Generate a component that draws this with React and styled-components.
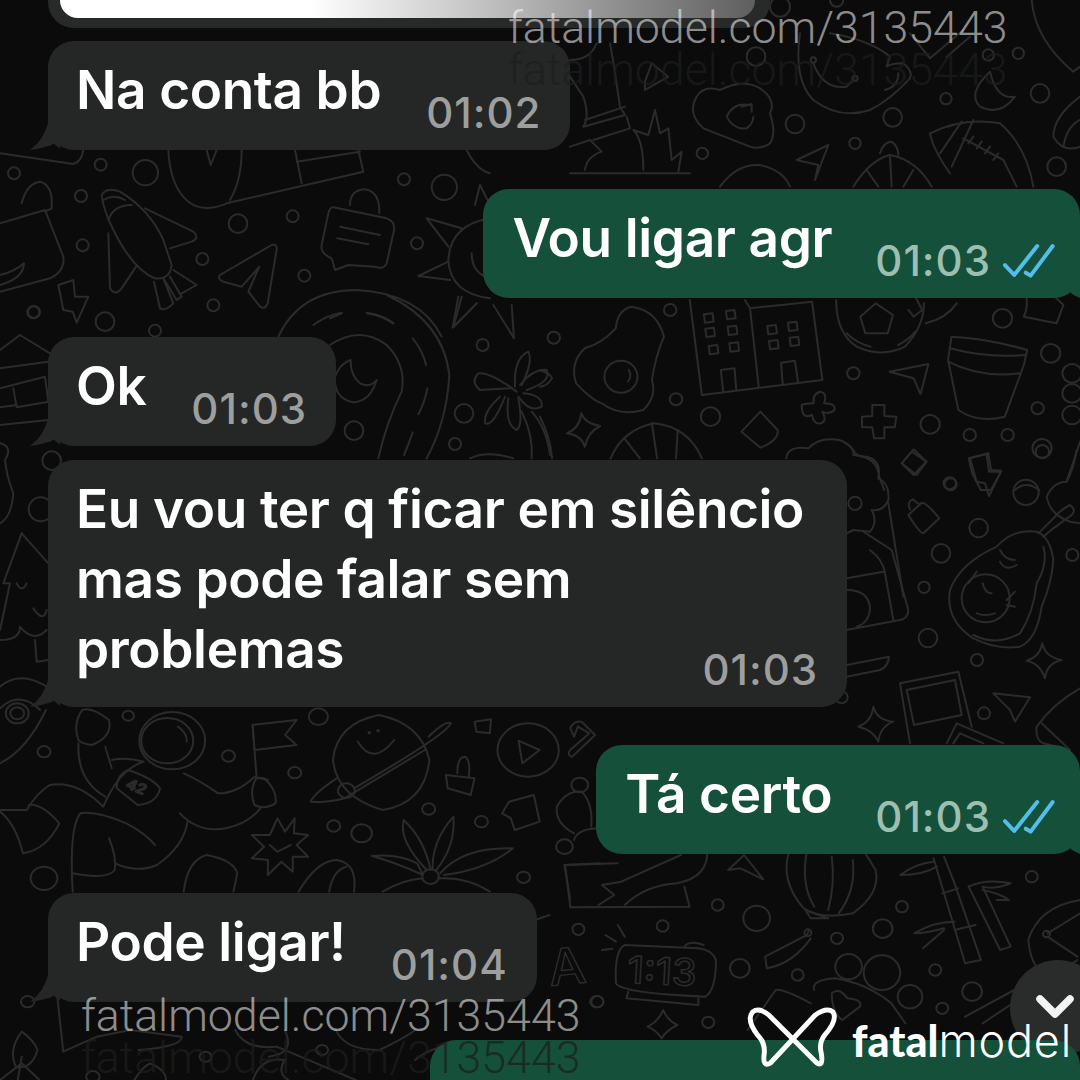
import React from 'react'
import styled, { createGlobalStyle } from 'styled-components'

const GlobalStyle = createGlobalStyle`
  html, body { margin: 0; padding: 0; background: #0b0b0b; }
`

const Screen = styled.div`
  position: relative;
  width: 1080px;
  height: 1080px;
  overflow: hidden;
  background: #0b0b0b;
  font-family: Inter, "Liberation Sans", sans-serif;
`

const Wallpaper = styled.svg`
  position: absolute;
  inset: 0;
  width: 1080px;
  height: 1080px;
`

const Chat = styled.div`
  position: relative;
  display: flex;
  flex-direction: column;
  align-items: flex-start;
`

const ReplyCard = styled.div`
  box-sizing: border-box;
  width: 722px;
  height: 28px;
  margin-left: 48px;
  padding: 0 15px 0 12px;
  background: #282929;
  border-radius: 0 0 26px 26px;
`

const ReplyImage = styled.div`
  height: 18px;
  border-radius: 0 0 18px 18px;
  background: linear-gradient(90deg, #fff 0%, #fff 36%, #c9c9c9 58%, #8f8f8f 80%, #5f5f5f 100%);
`

const Bubble = styled.div`
  position: relative;
  box-sizing: border-box;
  display: flex;
  flex-direction: ${p => (p.$stacked ? 'column' : 'row')};
  align-items: flex-end;
  gap: ${p => (p.$stacked ? 0 : p.$out ? 43 : 45)}px;
  margin-top: ${p => p.$top}px;
  margin-left: ${p => (p.$out ? 0 : 48)}px;
  align-self: ${p => (p.$out ? 'flex-end' : 'flex-start')};
  padding: 14px ${p => (p.$out ? 23 : 29)}px 25px ${p => (p.$out ? 29 : 28)}px;
  background: ${p => (p.$out ? '#15503b' : '#252626')};
  border-radius: 26px;
`

const Message = styled.div`
  align-self: flex-start;
  color: #fff;
  font-size: 53.2px;
  font-weight: 600;
  line-height: 70px;
  letter-spacing: -0.4px;
  white-space: nowrap;
  ${p => p.$stacked && 'margin-right: 14px;'}
`

const Meta = styled.div`
  display: flex;
  align-items: center;
  gap: 10px;
  margin: ${p => (p.$stacked ? '-33px 0 -7px' : '0 0 -7px')};
`

const Time = styled.span`
  color: ${p => (p.$out ? '#9dbfb1' : '#9d9e9e')};
  font-size: 42px;
  font-weight: 500;
  line-height: 38px;
  letter-spacing: 1px;
  white-space: nowrap;
`

const Ticks = styled.svg`
  width: 56px;
  height: 38px;
`

const Tail = styled.svg`
  position: absolute;
  bottom: 0;
  ${p => (p.$out ? 'right: 0;' : 'left: -18px;')}
  width: ${p => (p.$out ? 20 : 30)}px;
  height: 30px;
`

const NextBubble = styled.div`
  width: 650px;
  height: 80px;
  margin-top: 38px;
  align-self: flex-end;
  background: #15503b;
  border-radius: 26px 26px 0 0;
`

const ScrollButton = styled.div`
  position: absolute;
  left: 1010px;
  top: 960px;
  width: 96px;
  height: 96px;
  border-radius: 50%;
  background: #2a2b2b;
  display: flex;
  align-items: center;
  justify-content: center;
`

const Chevron = styled.svg`
  width: 40px;
  height: 26px;
  margin-left: -6px;
  margin-top: -2px;
`

const Watermark = styled.div`
  position: absolute;
  left: ${p => p.$x}px;
  top: ${p => p.$y}px;
  font-family: Roboto, "Liberation Sans", sans-serif;
  font-size: 44.7px;
  font-weight: 300;
  line-height: 50px;
  white-space: nowrap;
  color: ${p => (p.$dim ? 'rgba(28, 30, 30, 0.75)' : 'rgba(255, 255, 255, 0.55)')};
`

const Brand = styled.div`
  position: absolute;
  left: 746px;
  top: 1007px;
  display: flex;
  align-items: center;
  gap: 14px;
`

const BrandMark = styled.svg`
  width: 92px;
  height: 64px;
`

const BrandName = styled.div`
  color: #fff;
  font-family: Lato, Inter, sans-serif;
  font-size: 43px;
  line-height: 50px;
  font-weight: 900;
  margin-top: 4px;
  white-space: nowrap;
  span { font-family: Inter, sans-serif; font-size: 45px; font-weight: 300; letter-spacing: 0.8px; }
`

const sq = (x, y, s) => `M${x} ${y} L${x + s} ${y - 3} L${x + s + 3} ${y + s - 3} L${x + 3} ${y + s}Z`

// wallpaper drawing, each patch is in its own coordinates and gets mapped to the page
const patches = [
  {
    at: [0, 150, 3, 3],
    c: [[42, 70, 18], [302, 44, 18], [436, 68, 38], [243, 138, 18], [248, 286, 18], [100, 487, 18], [315, 515, 28], [607, 327, 18], [714, 221, 28], [878, 199, 18], [913, 377, 18], [640, 466, 18], [465, 542, 18], [1212, 88, 18], [1333, 112, 38], [1251, 280, 18]],
    p: [
      'M0 220 L135 180 L190 320 Q195 365 150 385 L0 425', 'M65 160 Q80 100 120 95 Q160 105 155 175 L135 185', 'M0 375 Q45 365 72 340 Q70 385 0 405',
      'M175 405 L220 390 L225 440 L265 440 L230 518 L218 485 L190 480Z',
      'M305 135 Q320 110 360 125 Q450 180 490 270 L515 345 Q510 390 465 385 Q400 360 340 240 Q310 180 305 135Z', 'M325 210 Q340 165 395 165', 'M310 150 Q340 130 375 150',
      'M435 175 L580 245 Q600 265 575 275 L510 295', 'M325 250 L330 415 Q345 440 365 415 L408 350',
      'M462 395 L480 475 Q495 485 520 460 L490 385 M490 385 L530 450 L545 440 L510 380 M520 360 L590 405 L545 430',
      'M660 375 L815 285 Q832 280 830 298 L803 460 Q795 480 780 470 L745 425 L778 350 L725 410 L670 395 Q650 385 660 375Z',
      'M505 0 Q510 110 565 155 Q610 190 680 160 L1090 65 L1075 0', 'M725 0 Q725 90 690 150', 'M885 0 L905 100', 'M890 35 L1080 5', 'M620 0 L632 45 L650 0', 'M0 10 L220 42 Q245 35 250 0',
      'M1050 165 Q1050 120 1095 118 Q1140 125 1138 190', 'M1000 172 L1160 205 Q1190 215 1180 250 L1160 340 Q1150 360 1125 350 L1045 345 L1005 360 L995 325 Q960 310 965 285 L985 190 Q990 170 1000 172Z', 'M1020 230 L1140 255', 'M1012 265 L1105 283',
      'M1470 205 Q1350 225 1345 330 Q1350 430 1470 445', 'M1385 235 L1280 205 L1345 290', 'M1345 335 L1255 378 L1350 390', 'M1385 440 L1360 532 L1430 460', 'M1425 165 L1440 105 L1470 165', 'M1415 310 Q1415 370 1470 385',
      'M835 560 Q900 420 1070 420 Q1260 430 1325 560', 'M940 525 Q980 495 1025 488', 'M1100 488 Q1150 495 1180 520', 'M1400 0 Q1430 60 1470 70',
    ],
  },
  {
    at: [840, 450, 3, 3],
    c: [[332, 103, 18], [558, 127, 38], [416, 234, 28], [303, 310, 28], [252, 412, 17], [697, 315, 18], [264, 564, 28], [411, 630, 18], [432, 790, 18], [607, 5, 20], [437, 445, 72], [5, 742, 18], [45, 160, 20]],
    p: [
      'M40 0 Q45 20 80 20 Q125 30 115 85 Q150 100 145 150 Q130 185 95 180 Q115 215 90 245 L40 240 L20 250',
      'M70 245 L155 300 L205 480 Q205 505 180 510 L20 540', 'M145 160 L190 440', 'M90 300 Q130 330 135 370 L160 510', 'M20 385 L130 365', 'M20 420 Q90 420 90 480 Q85 520 50 530', 'M20 680 L120 660 Q145 650 147 620 L20 645',
      'M185 40 L215 5 L260 35 L230 75Z', 'M390 25 L440 12 L447 65 L483 65 L447 138 L435 100 L410 95Z', 'M205 195 L245 158 Q260 158 298 205 L250 250 Q240 250 205 195Z', 'M210 178 Q200 155 218 148 L240 165',
      'M590 245 Q520 235 470 290 Q360 340 330 420 Q315 510 400 565 Q470 600 540 590 Q590 570 605 470 Q635 400 640 330 Q630 260 590 245Z', 'M610 290 Q625 340 590 400 Q580 490 540 550 Q470 590 400 555', 'M595 250 L640 205 Q660 180 690 165 Q710 180 695 195 L640 235 L610 260',
      'M428 400 Q435 430 455 430', 'M480 300 Q495 330 525 330', 'M480 335 Q495 365 530 345', 'M410 490 Q435 500 465 490', 'M385 400 L410 365', 'M500 450 L525 425 M500 465 L525 470',
      'M710 0 Q700 60 680 95 Q640 95 620 140 Q630 195 690 215 L720 220',
      'M607 580 Q615 620 665 630 Q620 640 615 685 Q600 640 560 632 Q600 620 607 580Z', 'M180 700 L355 665 L395 830 M180 700 L210 880', 'M200 720 L345 690 L365 795 L222 825Z', 'M320 880 L350 820 L490 880', 'M340 880 L360 850 L430 880',
      'M100 770 Q110 810 160 815 Q120 830 115 875 Q100 840 55 830 Q95 815 100 770Z', 'M460 730 L570 742 L525 815 L510 780Z', 'M720 715 Q640 760 590 830 Q585 870 610 880 L690 900', 'M605 820 L690 900',
    ],
  },
  {
    at: [540, 290, 2.904, 3],
    c: [[235, 260, 48], [378, 60, 18], [40, 143, 18], [395, 328, 18], [495, 380, 28], [910, 250, 18], [1133, 403, 28], [1343, 85, 28], [1483, 190, 28], [1445, 355, 18], [1248, 435, 18], [1358, 435, 18], [1458, 475, 28], [1545, 250, 28], [1545, 310, 28], [1545, 375, 28], [1190, 580, 18]],
    p: [
      'M265 50 Q225 60 220 115 Q180 160 130 175 Q85 220 105 280 Q150 330 180 340 Q230 380 300 360 Q340 320 325 270 Q335 200 360 140 Q340 60 265 50Z', 'M258 240 Q268 260 255 275',
      'M435 30 L470 315 L820 270 L790 35 L610 55 L595 30', 'M610 55 L635 290', sq(476, 73, 25), sq(540, 63, 25), sq(480, 116, 25), sq(545, 110, 25), sq(490, 168, 25), sq(550, 160, 25), sq(660, 108, 25), sq(720, 98, 25), sq(665, 153, 25), sq(725, 143, 25),
      'M525 240 L565 235 L570 300 M525 240 L532 305', 'M700 218 L740 212 L750 280 M700 218 L705 285',
      'M860 30 Q860 130 920 170 Q990 205 1060 170 Q1115 110 1115 40', 'M975 40 L1025 75 L1010 130 L945 130 L930 80Z', 'M890 130 Q920 160 960 170', 'M1040 165 Q1070 150 1090 125', 'M1070 60 L1085 80 L1110 60 L1090 20', 'M1120 100 Q1180 85 1210 40',
      'M1015 245 L1128 222 L1105 312 L1085 265Z', 'M815 305 Q835 310 825 340 Q860 340 855 360 Q840 375 820 365 Q835 395 815 400 Q795 405 790 375 Q760 390 760 345 Q770 340 795 340 Q790 310 815 305Z',
      'M965 345 L1000 345 L1000 378 L1035 380 L1030 412 L1000 412 L1000 445 L970 445 L965 412 L935 412 L935 380 L965 378Z',
      'M1195 140 Q1300 145 1415 180 L1405 225 L1350 380 Q1270 400 1215 360 L1185 210Z', 'M1190 175 Q1300 205 1410 195', 'M1185 215 Q1280 265 1395 250',
      'M120 370 Q130 400 175 408 Q140 425 130 470 Q120 435 78 430 Q115 415 120 370Z', 'M640 365 L690 420 Q695 450 640 473 L585 425Z',
      'M205 505 Q240 420 330 400 Q430 410 470 505', 'M245 445 L290 505', 'M325 400 L340 505', 'M400 420 L395 505', 'M715 505 Q720 465 780 475 Q810 440 870 450 Q915 470 910 495 Q980 500 985 560 L1000 600',
      'M1085 478 L1122 515 L1085 555 L1050 520Z', 'M1245 505 L1302 490 L1310 540 L1340 542 L1310 600 L1280 600 L1255 550Z', 'M1410 2 Q1420 50 1405 80 L1500 100 L1520 45 L1480 5', 'M0 240 Q30 250 35 265 Q20 290 0 290', 'M0 380 Q30 440 35 505', 'M1568 455 Q1555 500 1530 570', 'M1380 600 Q1410 570 1450 600',
    ],
  },
  {
    at: [0, 700, 2.613, 3],
    c: [[45, 40, 30], [45, 40, 18], [335, 47, 15], [115, 155, 17], [597, 168, 17], [770, 218, 17], [832, 50, 25], [1120, 327, 17], [1258, 365, 17], [872, 378, 17], [945, 400, 27], [115, 535, 35], [1368, 532, 17], [450, 122, 86], [437, 122, 68], [905, 272, 22], [965, 98, 2], [988, 92, 2], [1380, 150, 80], [1125, 530, 22], [1515, 255, 22], [1475, 440, 22]],
    p: [
      'M205 120 Q190 70 215 30 Q240 20 285 60 Q295 110 240 135 Q210 130 205 120', 'M205 130 Q200 240 275 290', 'M275 140 L292 205', 'M292 180 Q330 170 375 185', 'M375 185 Q310 210 270 320 Q200 240 130 255 Q95 280 70 330 L0 330', 'M0 335 Q40 370 60 460 Q120 450 155 370 Q110 310 75 315',
      'M335 210 Q305 225 305 265 L360 315 Q410 310 418 265 Q400 235 335 210Z', 'M465 80 Q490 100 488 125', 'M480 220 Q520 240 570 280 Q620 280 665 230 L700 240', 'M690 235 Q725 270 720 310 Q690 330 665 315 Q650 270 670 235Z', 'M470 340 Q520 400 590 385 Q650 370 680 325',
      'M660 75 L775 60 L745 105 L775 135 L665 150Z', 'M660 75 L670 225', 'M190 575 Q180 380 210 340 Q250 330 330 370 Q380 400 405 435', 'M285 415 Q305 470 300 510 Q280 540 190 520', 'M300 490 Q360 520 410 495 Q480 440 490 365', 'M480 575 Q490 480 540 465 Q610 480 620 520 L610 575', 'M0 190 Q70 150 120 30',
      'M780 575 Q830 480 880 480 Q935 490 925 575', 'M860 575 Q870 510 905 500',
      'M990 45 Q880 70 870 180 Q880 290 1000 330 Q1110 310 1122 180 Q1100 70 990 45Z', 'M1120 110 Q1165 60 1178 70 Q1165 105 925 265', 'M880 235 Q820 280 812 305 Q850 310 900 295 L1110 150', 'M935 125 Q975 200 1030 120',
      'M1240 65 L1283 58 L1280 100 L1245 95Z', 'M1355 122 L1410 150 L1365 190Z', 'M1490 85 Q1500 60 1520 65 L1555 105 L1495 170 Q1480 165 1490 150 L1540 100 L1510 80 L1500 110Z', 'M1165 225 L1240 235 L1230 285 L1170 265Z', 'M1195 220 Q1195 170 1215 170 Q1230 180 1225 230', 'M1330 305 L1395 285 L1410 365 L1345 390 L1335 355 L1312 340Z',
      'M725 355 L745 395 L770 355 L768 400 L805 405 L775 435 L805 470 L765 470 L765 515 L735 485 L700 525 L700 480 L658 475 L690 440 L658 405 L705 405Z', 'M705 435 L725 455 L760 435',
      'M1115 510 Q1040 420 1055 360 Q1110 420 1125 510', 'M1130 505 Q1130 420 1185 350 Q1190 440 1140 510', 'M1105 525 Q1040 490 972 468 Q1040 460 1090 490 L1105 525', 'M1150 520 Q1210 440 1340 445 Q1270 510 1160 525', 'M1000 575 Q1050 540 1105 535', 'M1145 535 Q1220 530 1280 575',
      'M1500 400 Q1450 370 1455 320 Q1480 270 1520 275 Q1550 310 1545 380', 'M1500 420 Q1510 385 1568 385', 'M1475 495 L1568 490', 'M1475 495 L1490 600',
    ],
    t: [{ s: '42', x: 326, y: 262, size: 42, r: 26 }],
  },
  {
    at: [530, 850, 2.85, 3],
    c: [[535, 165, 17], [646, 205, 38], [1060, 170, 17], [1430, 80, 17], [1005, 236, 28], [875, 265, 17], [138, 238, 17], [378, 228, 17], [598, 355, 28], [763, 375, 17], [908, 350, 38], [1003, 368, 52], [1083, 440, 35], [1155, 360, 17], [1260, 425, 28], [1175, 475, 17], [192, 455, 17], [508, 517, 17], [792, 248, 10], [1472, 252, 10]],
    p: [
      'M100 45 L250 40 M100 45 L115 172 L455 170 L440 110', 'M195 165 L240 135 L205 105 L260 95 L430 15', 'M270 165 Q330 105 420 100 Q510 80 505 0', 'M565 60 L610 15 L665 88 L600 55Z',
      'M740 0 Q710 90 780 175 Q830 210 920 190 Q1000 130 985 60 L950 0', 'M790 0 Q770 100 810 170', 'M860 20 Q870 100 850 180', 'M920 30 Q930 120 880 190', 'M785 180 L850 205 L800 205Z', 'M795 240 Q790 260 780 260 L670 320 L675 355 Q750 340 800 265',
      'M1150 25 L1240 340 L1285 330 L1210 100 L1180 20', 'M1175 130 L1220 115', 'M1210 240 L1270 225', 'M1250 110 L1340 300 L1370 290 L1290 110', 'M1150 35 Q1100 40 1055 75 Q1120 75 1160 50', 'M1250 110 Q1300 85 1370 100 Q1320 120 1290 110', 'M1290 120 Q1340 130 1365 150 L1330 150', 'M1210 215 Q1150 215 1095 250 Q1130 250 1180 235', 'M1180 240 L1120 295',
      'M270 285 Q240 300 245 400 Q260 430 500 440 Q530 420 530 330 Q520 300 480 295Z', 'M280 425 L275 445 L480 465 L480 445', 'M205 300 L235 296', 'M215 255 L245 275', 'M250 225 L270 260', 'M440 290 Q455 270 495 285',
      'M1568 150 Q1450 170 1420 270 Q1425 320 1440 345', 'M1475 250 L1568 190', 'M1475 260 L1560 320', 'M1240 500 L1380 420', 'M1290 520 L1560 330', 'M15 210 L55 195',
      'M620 540 L700 420 Q720 415 800 460', 'M810 420 Q800 390 870 385 Q960 400 1030 460 L1070 520', 'M860 430 Q880 410 905 445 Q950 450 940 470 L890 510 Q860 490 860 430Z', 'M380 480 Q390 510 420 525 Q390 540 375 565 Q360 540 335 530 Q365 515 380 480Z',
    ],
    t: [{ s: '1:13', x: 276, y: 398, size: 112, r: 3 }, { s: 'A', x: 58, y: 408, size: 150, r: -6 }],
  },
  {
    at: [570, 0, 3, 3],
    c: [[558, 170, 28], [675, 372, 28], [968, 352, 28], [855, 430, 17], [397, 460, 17], [1128, 296, 17], [1410, 280, 28], [1345, 160, 17], [1460, 500, 28], [1255, 165, 17], [630, 20, 30], [800, 0, 20], [730, 180, 8], [855, 235, 8]],
    p: [
      'M380 290 Q400 255 450 270 Q520 235 570 265 Q620 300 600 340 Q620 400 600 430 Q570 450 540 440 L400 385 Q350 340 380 290Z', 'M540 315 Q490 305 470 350 Q490 390 530 385 Q550 370 550 350', 'M515 320 L545 312 L545 335',
      'M690 100 Q670 240 730 300 Q810 360 900 330 Q960 300 1020 235 Q1030 215 1000 190 Q960 190 950 200 L960 170 Q900 120 780 100', 'M730 190 Q760 270 830 260 L850 240', 'M945 270 Q985 260 985 220', 'M1020 100 L1080 175 L1180 90', 'M1130 170 L1200 110',
      'M1260 215 Q1190 280 1230 320 Q1290 350 1335 290 Q1280 300 1260 215Z', 'M1080 400 Q1180 350 1290 370 Q1370 440 1390 560', 'M1080 400 Q1090 450 1140 520', 'M1110 460 L1175 365', 'M1145 500 L1210 360', 'M1180 415 L1300 480', 'M1210 410 L1195 430 M1235 425 L1220 445 M1260 440 L1245 460 M1285 460 L1270 480', 'M1300 480 L1340 560',
      'M1385 0 Q1395 120 1510 215 L1530 200', 'M1530 290 Q1450 350 1450 410 Q1480 460 1530 440', 'M1530 360 Q1490 380 1480 440',
      'M930 460 Q940 425 965 425 Q985 440 985 465', 'M850 560 Q900 480 960 465 Q1040 480 1085 560', 'M960 470 L965 560', 'M890 510 L925 560', 'M1030 510 L1000 560', 'M775 435 L680 480 L745 495 L735 540Z',
      'M120 130 Q130 180 150 320 L165 345 L40 380 Q60 350 40 290 L0 230', 'M45 360 L165 320', 'M70 420 L180 385 L170 350', 'M0 520 L360 520', 'M220 510 Q220 420 190 390 L235 405 L255 330 L270 400 L295 385 L305 480 L335 455 L325 515', 'M45 510 Q50 470 95 455 L60 420 L0 440', 'M450 560 Q500 490 570 495 Q640 510 660 560', 'M80 130 Q60 180 0 180', 'M225 245 L245 190 L295 230 L225 270Z',
    ],
  },
  {
    at: [330, 295, 3, 3],
    c: [[72, 407, 28], [458, 150, 18], [402, 355, 28], [375, 447, 18]],
    p: [
      'M170 0 Q340 80 358 240 Q350 380 290 490', 'M0 70 L35 55', 'M110 55 Q150 60 190 85', 'M248 130 Q280 170 288 210', 'M292 280 Q285 320 265 358', 'M248 412 Q235 450 222 480', 'M0 150 Q90 90 170 150 Q230 210 215 290 Q170 380 145 490',
      'M62 195 Q60 240 90 265 Q120 280 140 255 Q120 320 70 322 Q10 310 15 245 Q30 205 62 195Z',
      'M385 5 L368 98 L440 25', 'M490 30 L552 130 L545 30', 'M560 290 Q480 230 445 235 Q420 260 450 285 L540 280', 'M555 275 Q550 190 595 170 Q610 200 575 270', 'M570 270 Q610 220 650 225 Q665 260 590 285', 'M580 295 Q640 300 635 335 Q600 355 565 305', 'M565 310 Q580 390 560 405 Q525 390 535 310', 'M525 305 Q490 395 465 385 Q460 350 510 305', 'M420 490 Q470 465 550 490', 'M575 350 Q610 420 605 490', 'M605 350 Q650 400 660 480',
    ],
  },
  {
    at: [0, 290, 3, 3],
    c: [[102, 66, 18], [155, 512, 28], [122, 658, 36]],
    p: [
      'M0 180 L60 135 L150 190', 'M0 235 L145 215', 'M0 405 L145 390', 'M0 295 L135 260 L145 335 L50 352 L40 295', 'M0 352 L50 345', 'M0 460 Q40 470 15 510 Q20 560 40 610 Q35 680 0 700',
      'M65 730 L145 820', 'M65 730 L10 880 L30 880 L0 1020', 'M50 880 Q65 910 80 880', 'M100 955 Q130 1000 140 960', 'M0 1050 Q60 1050 60 1010 Q100 1060 140 1020', 'M105 1050 L110 1115 L145 1110', 'M0 1190 Q60 1140 140 1190', 'M0 1255 Q60 1200 120 1260',
    ],
  },
  {
    at: [0, 980, 2.53, 3],
    c: [[235, 290, 17], [520, 230, 15], [815, 210, 15], [1510, 65, 17], [70, 65, 17]],
    p: [
      'M55 155 Q20 210 40 260 Q80 270 95 210 Q85 180 55 155Z', 'M55 230 L45 300', 'M0 300 L55 250 L100 300', 'M145 50 L160 215 L245 170 L330 150 L460 170 Q460 200 350 210', 'M595 150 Q620 210 700 200 L820 260 L900 300', 'M720 150 Q750 220 680 230', 'M850 150 Q870 210 960 210 Q1030 170 1050 150', 'M1050 240 Q1100 190 1200 190', 'M340 300 Q360 260 380 250 Q420 270 420 300', 'M640 300 Q660 230 720 240 Q700 280 730 300',
    ],
  },
]

const Doodles = () => (
  <Wallpaper viewBox="0 0 1080 1080">
    {patches.map(({ at: [x, y, sx, sy], c, p, t = [] }, i) => (
      <g key={i} transform={`translate(${x} ${y}) scale(${1 / sx} ${1 / sy})`} fill="none" stroke="#2b2b2b" strokeLinecap="round" strokeLinejoin="round">
        {c.map(([cx, cy, r], j) => <circle key={j} cx={cx} cy={cy} r={r} strokeWidth="2" vectorEffect="non-scaling-stroke" />)}
        {p.map((d, j) => <path key={j} d={d} strokeWidth="2" vectorEffect="non-scaling-stroke" />)}
        {t.map(item => (
          <text key={item.s} x={item.x} y={item.y} fontSize={item.size} fontFamily="Inter, sans-serif" fontWeight="500" strokeWidth="1.5" vectorEffect="non-scaling-stroke" transform={`rotate(${item.r} ${item.x} ${item.y})`}>{item.s}</text>
        ))}
      </g>
    ))}
  </Wallpaper>
)

const Row = ({ out, top, stacked, time, children }) => (
  <Bubble $out={out} $top={top} $stacked={stacked}>
    <Message $stacked={stacked}>{children}</Message>
    <Meta $stacked={stacked}>
      <Time $out={out}>{time}</Time>
      {out && (
        <Ticks viewBox="480 185 170 115" fill="none" stroke="#53bdeb" strokeWidth="12" strokeLinecap="round" strokeLinejoin="round">
          <path d="M492 255 L520 285 L590 197" />
          <path d="M555 278 L570 287 L637 197" />
        </Ticks>
      )}
    </Meta>
    {out ? (
      <Tail $out viewBox="0 0 20 30"><path d="M8 23 Q14 28 20 30 L20 4 Q16 18 8 23Z" fill="#15503b" /></Tail>
    ) : (
      <Tail viewBox="0 0 30 30"><path d="M19 0 Q14 20 0 30 Q14 28 24 24 Q32 30 30 30 L30 0Z" fill="#252626" /></Tail>
    )}
  </Bubble>
)

export default function App() {
  return (
    <Screen>
      <GlobalStyle />
      <Doodles />
      <ScrollButton>
        <Chevron viewBox="0 0 40 26" fill="none" stroke="#f4f4f4" strokeWidth="7.5" strokeLinecap="round" strokeLinejoin="round">
          <path d="M5 5 L20 20 L35 5" />
        </Chevron>
      </ScrollButton>
      <Chat>
        <ReplyCard><ReplyImage /></ReplyCard>
        <Row top={13} time="01:02">Na conta bb</Row>
        <Row out top={39} time="01:03">Vou ligar agr</Row>
        <Row top={39} time="01:03">Ok</Row>
        <Row top={14} stacked time="01:03">
          Eu vou ter q ficar em silêncio<br />mas pode falar sem<br />problemas
        </Row>
        <Row out top={38} time="01:03">Tá certo</Row>
        <Row top={39} time="01:04">Pode ligar!</Row>
        <NextBubble />
      </Chat>
      <Watermark $x={508} $y={3}>fatalmodel.com/3135443</Watermark>
      <Watermark $x={508} $y={45} $dim>fatalmodel.com/3135443</Watermark>
      <Watermark $x={81} $y={991}>fatalmodel.com/3135443</Watermark>
      <Watermark $x={81} $y={1033} $dim>fatalmodel.com/3135443</Watermark>
      <Brand>
        <BrandMark viewBox="130 200 280 195" fill="none" stroke="#fff" strokeWidth="15" strokeLinejoin="round">
          <path d="M150 215 Q170 200 200 225 L345 370 Q365 385 360 345 Q350 310 370 285 Q410 240 395 215 Q375 200 340 225 L205 370 Q180 385 185 345 Q190 310 165 285 Q130 240 150 215Z" />
        </BrandMark>
        <BrandName>fatal<span>model</span></BrandName>
      </Brand>
    </Screen>
  )
}
